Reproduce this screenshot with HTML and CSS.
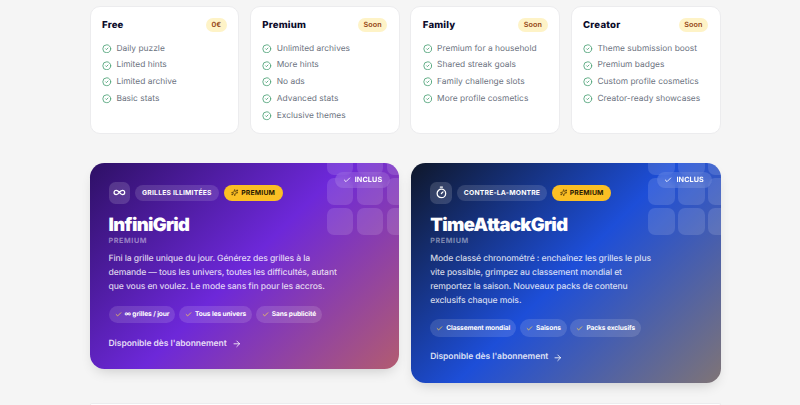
FILE: index.html
```html
<!DOCTYPE html>
<html lang="fr">
<head>
  <meta charset="UTF-8" />
  <meta name="viewport" content="width=device-width, initial-scale=1.0" />
  <title>Premium</title>
  <link rel="stylesheet" href="styles.css">
</head>
<body>
  <!-- Shared icons -->
  <svg class="sprite" aria-hidden="true">
    <symbol id="circle-check" viewBox="0 0 24 24"><circle cx="12" cy="12" r="10" /><path d="m9 12 2 2 4-4" /></symbol>
    <symbol id="check" viewBox="0 0 24 24"><path d="M20 6 9 17l-5-5" /></symbol>
    <symbol id="arrow" viewBox="0 0 24 24"><path d="M5 12h14M12 5l7 7-7 7" /></symbol>
    <symbol id="infinity" viewBox="0 0 24 24"><path d="M12 12c-2-2.67-4-4-6-4a4 4 0 1 0 0 8c2 0 4-1.33 6-4Zm0 0c2 2.67 4 4 6 4a4 4 0 0 0 0-8c-2 0-4 1.33-6 4Z" /></symbol>
    <symbol id="timer" viewBox="0 0 24 24"><path d="M10 2h4M12 14l3-3" /><circle cx="12" cy="14" r="8" /></symbol>
    <symbol id="sparkles" viewBox="0 0 24 24"><path d="M9.9 15.5A2 2 0 0 0 8.5 14.1l-6.1-1.6a.5.5 0 0 1 0-1L8.5 9.9A2 2 0 0 0 9.9 8.5l1.6-6.1a.5.5 0 0 1 1 0L14.1 8.5A2 2 0 0 0 15.5 9.9l6.1 1.6a.5.5 0 0 1 0 1L15.5 14.1a2 2 0 0 0-1.4 1.4l-1.6 6.1a.5.5 0 0 1-1 0zM20 3v4M22 5h-4M4 17v2M5 18H3" /></symbol>
  </svg>

  <div class="container">
    <div class="plans">
      <div class="plan">
        <div class="plan-head"><h3>Free</h3><span class="badge">0€</span></div>
        <ul>
          <li><svg><use href="#circle-check" /></svg>Daily puzzle</li>
          <li><svg><use href="#circle-check" /></svg>Limited hints</li>
          <li><svg><use href="#circle-check" /></svg>Limited archive</li>
          <li><svg><use href="#circle-check" /></svg>Basic stats</li>
        </ul>
      </div>
      <div class="plan">
        <div class="plan-head"><h3>Premium</h3><span class="badge">Soon</span></div>
        <ul>
          <li><svg><use href="#circle-check" /></svg>Unlimited archives</li>
          <li><svg><use href="#circle-check" /></svg>More hints</li>
          <li><svg><use href="#circle-check" /></svg>No ads</li>
          <li><svg><use href="#circle-check" /></svg>Advanced stats</li>
          <li><svg><use href="#circle-check" /></svg>Exclusive themes</li>
        </ul>
      </div>
      <div class="plan">
        <div class="plan-head"><h3>Family</h3><span class="badge">Soon</span></div>
        <ul>
          <li><svg><use href="#circle-check" /></svg>Premium for a household</li>
          <li><svg><use href="#circle-check" /></svg>Shared streak goals</li>
          <li><svg><use href="#circle-check" /></svg>Family challenge slots</li>
          <li><svg><use href="#circle-check" /></svg>More profile cosmetics</li>
        </ul>
      </div>
      <div class="plan">
        <div class="plan-head"><h3>Creator</h3><span class="badge">Soon</span></div>
        <ul>
          <li><svg><use href="#circle-check" /></svg>Theme submission boost</li>
          <li><svg><use href="#circle-check" /></svg>Premium badges</li>
          <li><svg><use href="#circle-check" /></svg>Custom profile cosmetics</li>
          <li><svg><use href="#circle-check" /></svg>Creator-ready showcases</li>
        </ul>
      </div>
    </div>

    <div class="modes">
      <div class="mode infini">
        <div class="tiles"><i></i><i></i><i></i><i></i><i></i><i></i><i></i><i></i><i></i></div>
        <span class="included"><svg><use href="#check" /></svg>INCLUS</span>
        <div class="tags">
          <span class="mode-icon"><svg><use href="#infinity" /></svg></span>
          <span class="tag">GRILLES ILLIMITÉES</span>
          <span class="tag gold"><svg><use href="#sparkles" /></svg>PREMIUM</span>
        </div>
        <h2>InfiniGrid</h2>
        <div class="tier">PREMIUM</div>
        <p>Fini la grille unique du jour. Générez des grilles à la<br>demande — tous les univers, toutes les difficultés, autant<br>que vous en voulez. Le mode sans fin pour les accros.</p>
        <div class="chips">
          <span class="chip"><svg><use href="#check" /></svg>∞ grilles / jour</span>
          <span class="chip"><svg><use href="#check" /></svg>Tous les univers</span>
          <span class="chip"><svg><use href="#check" /></svg>Sans publicité</span>
        </div>
        <div class="cta">Disponible dès l'abonnement<svg><use href="#arrow" /></svg></div>
      </div>

      <div class="mode attack">
        <div class="tiles"><i></i><i></i><i></i><i></i><i></i><i></i><i></i><i></i><i></i></div>
        <span class="included"><svg><use href="#check" /></svg>INCLUS</span>
        <div class="tags">
          <span class="mode-icon"><svg><use href="#timer" /></svg></span>
          <span class="tag">CONTRE-LA-MONTRE</span>
          <span class="tag gold"><svg><use href="#sparkles" /></svg>PREMIUM</span>
        </div>
        <h2>TimeAttackGrid</h2>
        <div class="tier">PREMIUM</div>
        <p>Mode classé chronométré : enchaînez les grilles le plus<br>vite possible, grimpez au classement mondial et<br>remportez la saison. Nouveaux packs de contenu<br>exclusifs chaque mois.</p>
        <div class="chips">
          <span class="chip"><svg><use href="#check" /></svg>Classement mondial</span>
          <span class="chip"><svg><use href="#check" /></svg>Saisons</span>
          <span class="chip"><svg><use href="#check" /></svg>Packs exclusifs</span>
        </div>
        <div class="cta">Disponible dès l'abonnement<svg><use href="#arrow" /></svg></div>
      </div>
    </div>

    <div class="next-panel"></div>
  </div>
</body>
</html>
```

FILE: styles.css
```css
* {
  box-sizing: border-box;
  margin: 0;
  padding: 0;
}

body {
  font-family: Inter, 'Liberation Sans', sans-serif;
  text-rendering: geometricPrecision;
  background: #f5f5f5;
  color: #0b0b2b;
  height: 405px;
  overflow: hidden;
}

svg {
  fill: none;
  stroke: currentColor;
  stroke-width: 2;
  stroke-linecap: round;
  stroke-linejoin: round;
  flex-shrink: 0;
}

.sprite {
  display: none;
}

.container {
  display: flex;
  flex-direction: column;
  width: 631px;
  height: 405px;
  margin-left: 89.5px;
  padding-top: 5.5px;
}

/* Plans */
.plans {
  display: grid;
  grid-template-columns: repeat(4, 1fr);
  gap: 10.4px;
  height: 128px;
}

.plan {
  background: #fff;
  border: 1px solid #ececee;
  border-radius: 10px;
  padding: 11.7px 11.5px 0;
}

.plan-head {
  display: flex;
  align-items: center;
  justify-content: space-between;
  height: 14px;
}

.plan h3 {
  padding-top: 1px;
  font-size: 9.6px;
  font-weight: 800;
  letter-spacing: 0.2px;
}

.badge {
  background: #fef3c7;
  color: #92400e;
  border-radius: 10px;
  padding: 0 5.6px;
  font-size: 7.2px;
  font-weight: 600;
  line-height: 14px;
  letter-spacing: 0.1px;
}

.plan ul {
  list-style: none;
  margin-top: 8px;
}

.plan li {
  display: flex;
  align-items: center;
  gap: 4.8px;
  height: 16.8px;
  font-size: 8.4px;
  letter-spacing: 0.02px;
  color: #6b7280;
  white-space: nowrap;
}

.plan li svg {
  width: 9.6px;
  height: 9.6px;
  color: #3f9b6c;
}

/* Game modes */
.modes {
  display: grid;
  grid-template-columns: 1fr 1fr;
  align-items: start;
  gap: 12.4px;
  height: 240px;
  margin-top: 29.5px;
}

.mode {
  position: relative;
  overflow: hidden;
  border-radius: 14.4px;
  padding: 19px;
  color: #fff;
  box-shadow: 0 6px 14px -5px rgba(0, 0, 0, 0.2);
}

.infini {
  height: 206px;
  background: linear-gradient(135deg, #2e1065 0%, #6d28d9 50%, #b25c70 100%);
}

.attack {
  height: 219.5px;
  background: linear-gradient(135deg, #0f172a 0%, #1d4ed8 50%, #7f7476 100%);
}

.tiles {
  position: absolute;
  top: -15px;
  right: -14.3px;
  display: grid;
  grid-template-columns: repeat(3, 26.6px);
  grid-auto-rows: 26.6px;
  gap: 3.4px;
}

.tiles i {
  background: rgba(255, 255, 255, 0.13);
  border-radius: 7px;
}

.included {
  position: absolute;
  top: 8.5px;
  right: 9px;
  display: flex;
  align-items: center;
  gap: 4px;
  height: 16.5px;
  padding: 0 7.6px;
  border-radius: 9px;
  background: rgba(255, 255, 255, 0.13);
  backdrop-filter: blur(3px);
  font-size: 7.2px;
  font-weight: 700;
  letter-spacing: 0.1px;
}

.included svg {
  width: 8px;
  height: 8px;
  stroke-width: 2.5;
}

.tags {
  display: flex;
  align-items: center;
  gap: 5px;
  height: 21.5px;
}

.mode-icon {
  display: flex;
  align-items: center;
  justify-content: center;
  width: 21.5px;
  height: 21.5px;
  border-radius: 6.5px;
  background: rgba(255, 255, 255, 0.15);
}

.mode-icon svg {
  width: 12.8px;
  height: 12.8px;
  stroke-width: 2.4;
}

.tag {
  display: flex;
  align-items: center;
  gap: 2.5px;
  height: 15.5px;
  padding: 0 7.1px;
  border-radius: 8px;
  background: rgba(255, 255, 255, 0.13);
  font-size: 6.8px;
  font-weight: 700;
  letter-spacing: 0.18px;
  white-space: nowrap;
}

.gold {
  padding: 0 7.6px;
  background: #fbbf24;
  color: #2a1a05;
}

.gold svg {
  width: 7.4px;
  height: 7.4px;
  stroke-width: 1.8;
}

.mode h2 {
  margin-top: 11px;
  font-size: 18.4px;
  font-weight: 900;
  line-height: 20px;
  letter-spacing: -0.65px;
}

.tier {
  margin-top: 1.5px;
  font-size: 7.2px;
  font-weight: 700;
  line-height: 9px;
  letter-spacing: 0.6px;
  color: rgba(255, 255, 255, 0.45);
}

.mode p {
  margin-top: 8.4px;
  font-size: 8.6px;
  font-weight: 500;
  line-height: 13.7px;
  letter-spacing: -0.11px;
  color: rgba(255, 255, 255, 0.8);
  white-space: nowrap;
}

.chips {
  display: flex;
  gap: 3.6px;
  margin-top: 11.1px;
}

.chip {
  display: flex;
  align-items: center;
  gap: 3px;
  height: 17.5px;
  padding: 0 6px;
  border-radius: 9px;
  background: rgba(255, 255, 255, 0.13);
  font-size: 6.6px;
  font-weight: 700;
  letter-spacing: -0.08px;
  white-space: nowrap;
}

.chip svg {
  width: 7px;
  height: 7px;
  stroke-width: 2.6;
  color: #fcd34d;
}

.cta {
  display: flex;
  align-items: center;
  gap: 5px;
  margin-top: 14.5px;
  font-size: 8.5px;
  font-weight: 600;
  line-height: 12px;
  letter-spacing: -0.05px;
  color: rgba(255, 255, 255, 0.85);
}

.cta svg {
  width: 9.6px;
  height: 9.6px;
  stroke-width: 2.4;
}

/* Top edge of the panel below the fold */
.next-panel {
  flex: 1;
  background: #fff;
  border: 1px solid #ececee;
  border-bottom: 0;
  border-radius: 10px 10px 0 0;
}
```
